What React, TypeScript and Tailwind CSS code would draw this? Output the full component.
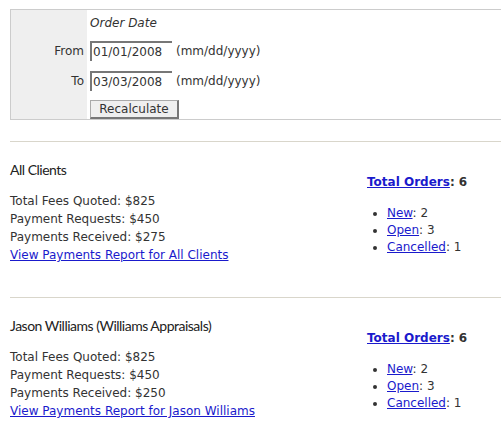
const clients = [
  {
    name: "All Clients",
    fees: "$825",
    requests: "$450",
    received: "$275",
    link: "View Payments Report for All Clients",
  },
  {
    name: "Jason Williams (Williams Appraisals)",
    fees: "$825",
    requests: "$450",
    received: "$250",
    link: "View Payments Report for Jason Williams",
  },
];

const orders = [
  { label: "New", count: 2 },
  { label: "Open", count: 3 },
  { label: "Cancelled", count: 1 },
];

export default function App() {
  return (
    <div className="min-h-[432px] bg-white pl-[10px] pt-[9px] text-[12px] text-[#333] font-['DejaVu_Sans',Verdana,sans-serif]">
      {/* Date filter */}
      <div className="flex border border-r-0 border-[#ccc] h-[111px]">
        <div className="w-[76px] bg-[#efefef] flex flex-col items-end pr-[3px] pt-[5px]">
          <div className="h-[26px]" />
          <div className="h-[30px] leading-[20px]">From</div>
          <div className="h-[29px] leading-[20px]">To</div>
        </div>
        <div className="flex flex-col pl-[3px] pt-[5px]">
          <div className="h-[26px] italic leading-[16px]">Order Date</div>
          <div className="h-[30px] flex items-start gap-[4px]">
            <input
              defaultValue="01/01/2008"
              className="w-[82px] h-[20px] px-[1px] border-t-2 border-l-2 border-[#777] border-r-0 border-b-0 text-[12px] text-[#333] outline-none"
            />
            <span className="leading-[20px]">(mm/dd/yyyy)</span>
          </div>
          <div className="h-[29px] flex items-start gap-[4px]">
            <input
              defaultValue="03/03/2008"
              className="w-[82px] h-[20px] px-[1px] border-t-2 border-l-2 border-[#777] border-r-0 border-b-0 text-[12px] text-[#333] outline-none"
            />
            <span className="leading-[20px]">(mm/dd/yyyy)</span>
          </div>
          <button className="w-[89px] h-[19px] bg-[#efefef] border border-[#aaa] border-r-2 border-b-2 border-r-[#777] border-b-[#777] text-[12px] text-[#333] leading-none">
            Recalculate
          </button>
        </div>
      </div>

      {clients.map((c) => (
        <div key={c.name}>
          <div className="mt-[21px] h-px bg-[#d9d6cb]" />
          <div className="flex pt-[19px] pb-[12px]">
            <div className="w-[357px] shrink-0">
              <div className="text-[14px] text-[#222] font-['Lato',sans-serif] tracking-[-0.5px] leading-[18px]">
                {c.name}
              </div>
              <div className="mt-[13px] leading-[18px]">
                <div>Total Fees Quoted: {c.fees}</div>
                <div>Payment Requests: {c.requests}</div>
                <div>Payments Received: {c.received}</div>
                <a href="#" className="text-[#1a1acc] underline">
                  {c.link}
                </a>
              </div>
            </div>
            <div className="pt-[13px]">
              <div className="font-bold leading-[16px]">
                <a href="#" className="text-[#1a1acc] underline">
                  Total Orders
                </a>
                : 6
              </div>
              <ul className="mt-[15px] pl-[20px] list-disc leading-[17px]">
                {orders.map((o) => (
                  <li key={o.label}>
                    <a href="#" className="text-[#1a1acc] underline">
                      {o.label}
                    </a>
                    : {o.count}
                  </li>
                ))}
              </ul>
            </div>
          </div>
        </div>
      ))}
    </div>
  );
}
